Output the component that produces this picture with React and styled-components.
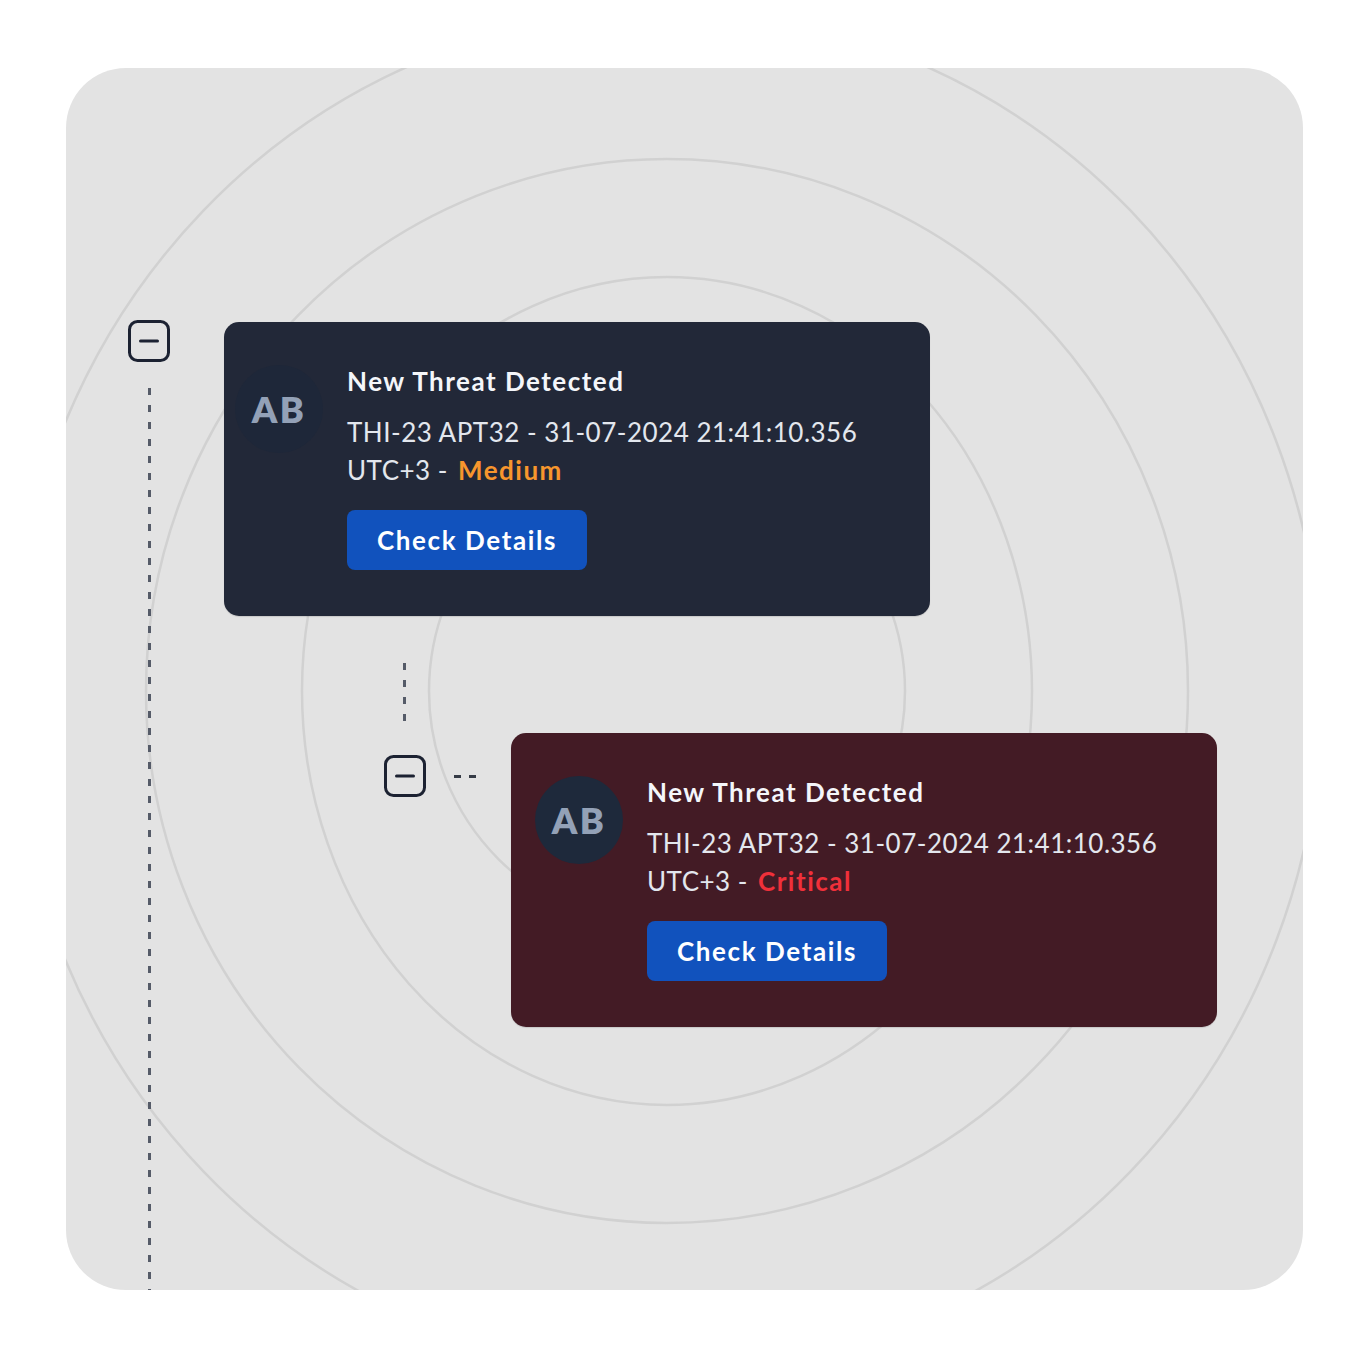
import styled, { createGlobalStyle } from "styled-components"

const GlobalStyle = createGlobalStyle`
    body {
        margin : 0;
        background-color : #ffffff;
        font-family : "Lato", "Noto Sans", sans-serif;
    }
`

const Page = styled.div`
    padding : 68px 0 66px 66px;
`

const Frame = styled.div`
    position : relative;
    width : 1237px;
    height : 1222px;
    box-sizing : border-box;
    border-radius : 60px;
    background-color : #e3e3e3;
    overflow : hidden;
    display : flex;
    gap : 54px;
    padding : 252px 0 0 62px;
`

const Rings = styled.svg`
    position : absolute;
    inset : 0;
    width : 100%;
    height : 100%;
    pointer-events : none;
`

const Rail = styled.div`
    position : relative;
    width : 42px;
    display : flex;
    flex-direction : column;
    align-items : center;
    flex-shrink : 0;
`

const DashedLine = styled.div`
    width : 3px;
    height : ${props => props.$length ? props.$length + "px" : "auto"};
    flex : ${props => props.$length ? "none" : "1"};
    margin-top : ${props => props.$offset || 0}px;
    background-image : repeating-linear-gradient(to bottom, #555b68 0 7px, transparent 7px 17px);
`

const Connector = styled.div`
    width : 22px;
    height : 3px;
    margin : 112px 0 0 28px;
    flex-shrink : 0;
    background-image : linear-gradient(to right, #363b46 0 7px, transparent 7px 15px, #363b46 15px 22px);
`

const Thread = styled.div`
    position : relative;
    display : flex;
    flex-direction : column;
`

const Branch = styled.div`
    display : flex;
    align-items : flex-start;
    margin : 47px 0 0 159px;
`

const BranchRail = styled.div`
    width : 43px;
    display : flex;
    flex-direction : column;
    align-items : center;
    gap : 26px;
    flex-shrink : 0;
`

const Card = styled.div`
    width : 706px;
    height : 294px;
    box-sizing : border-box;
    flex-shrink : 0;
    border-radius : 15px;
    background-color : ${props => props.$bg};
    display : flex;
    gap : 24px;
    padding : 43px 40px 0 ${props => props.$padLeft}px;
    margin : ${props => props.$margin};
    box-shadow : 0 1px 1px rgba(0, 0, 0, 0.12);
`

const Avatar = styled.div`
    width : 88px;
    height : 88px;
    border-radius : 50%;
    flex-shrink : 0;
    background-color : ${props => props.$bg};
    color : #93a1b7;
    font-size : 36px;
    font-weight : 800;
    letter-spacing : 2.5px;
    display : flex;
    align-items : center;
    justify-content : center;
`

const Body = styled.div`
    display : flex;
    flex-direction : column;
    align-items : flex-start;
    width : 540px;
`

const Title = styled.div`
    color : #f4f6fa;
    font-size : 26px;
    font-weight : 700;
    line-height : 32px;
    letter-spacing : 1.5px;
`

const Description = styled.div`
    margin-top : 16px;
    color : #e3e7ee;
    font-size : 26px;
    font-weight : 400;
    line-height : 38px;
    letter-spacing : 0.5px;
`

const MetaLine = styled.div`
    display : flex;
    gap : 10px;
`

const Level = styled.span`
    color : ${props => props.$color};
    font-weight : 700;
    letter-spacing : 1.5px;
`

const Button = styled.button`
    margin-top : 21px;
    height : 60px;
    padding : 0 30px;
    border : none;
    border-radius : 8px;
    background-color : #1152bd;
    color : #ffffff;
    font-family : inherit;
    font-size : 26px;
    font-weight : 700;
    letter-spacing : 1.6px;
    cursor : pointer;
`

const ToggleIcon = () => (
    <svg width="42" height="42" viewBox="0 0 42 42" fill="none">
        <rect x="1.5" y="1.5" width="39" height="39" rx="8" stroke="#1c2232" strokeWidth="3" />
        <line x1="12.5" y1="21" x2="29.5" y2="21" stroke="#1c2232" strokeWidth="3" strokeLinecap="round" />
    </svg>
)

const ThreatCard = ({ bg, avatarBg, padLeft, margin, level, levelColor }) => {
    return (
        <Card $bg={bg} $padLeft={padLeft} $margin={margin}>
            <Avatar $bg={avatarBg}>AB</Avatar>
            <Body>
                <Title>New Threat Detected</Title>
                <Description>
                    <div>THI-23 APT32 - 31-07-2024 21:41:10.356</div>
                    <MetaLine>
                        <span>UTC+3 -</span>
                        <Level $color={levelColor}>{level}</Level>
                    </MetaLine>
                </Description>
                <Button>Check Details</Button>
            </Body>
        </Card>
    )
}

const App = () => {
    return (
        <Page>
            <GlobalStyle />
            <Frame>
                <Rings viewBox="0 0 1237 1222">
                    <g fill="none" stroke="#d1d1d1" strokeWidth="2.5">
                        <ellipse cx="601" cy="623" rx="238" ry="238" />
                        <ellipse cx="601" cy="623" rx="365" ry="414" />
                        <ellipse cx="601" cy="623" rx="521" ry="532" />
                        <ellipse cx="601" cy="623" rx="655" ry="680" />
                    </g>
                </Rings>
                <Rail>
                    <ToggleIcon />
                    <DashedLine $offset={26} />
                </Rail>
                <Thread>
                    <ThreatCard
                        bg="#222838"
                        avatarBg="#1e2739"
                        padLeft={11}
                        margin="2px 0 0 0"
                        level="Medium"
                        levelColor="#f7962d"
                    />
                    <Branch>
                        <BranchRail>
                            <DashedLine $length={66} />
                            <ToggleIcon />
                        </BranchRail>
                        <Connector />
                        <ThreatCard
                            bg="#431b25"
                            avatarBg="#1e293b"
                            padLeft={24}
                            margin="70px 0 0 35px"
                            level="Critical"
                            levelColor="#f0303a"
                        />
                    </Branch>
                </Thread>
            </Frame>
        </Page>
    )
}

export default App
